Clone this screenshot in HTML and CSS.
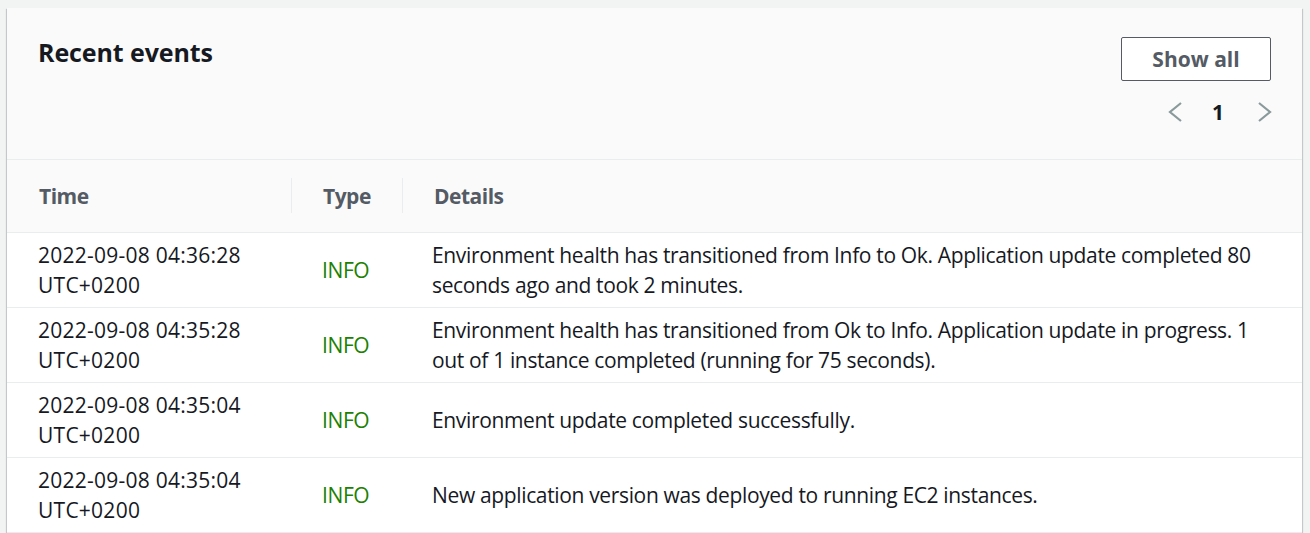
FILE: index.html
```html
<!DOCTYPE html>
<html lang="en">
<head>
<meta charset="utf-8">
<title>Recent events</title>
<link rel="stylesheet" href="styles.css">
</head>
<body>
<div class="card">
  <div class="card-header">
    <h2 class="title">Recent events</h2>
    <div class="actions">
      <button class="btn">Show all</button>
      <div class="pager">
        <svg class="chev" width="16" height="20" viewBox="0 0 16 20"><path d="M14 1 L3 10 L14 19" fill="none" stroke="#8a9a9b" stroke-width="2.2"/></svg>
        <span class="page">1</span>
        <svg class="chev chev-next" width="16" height="20" viewBox="0 0 16 20"><path d="M2 1 L13 10 L2 19" fill="none" stroke="#8a9a9b" stroke-width="2.2"/></svg>
      </div>
    </div>
  </div>
  <table class="events">
    <colgroup>
      <col class="c-time">
      <col class="c-type">
      <col>
    </colgroup>
    <thead>
      <tr>
        <th class="h-time">Time</th>
        <th class="h-div">Type</th>
        <th class="h-div">Details</th>
      </tr>
    </thead>
    <tbody>
      <tr>
        <td class="d-time">2022-09-08 04:36:28 UTC+0200</td>
        <td class="d-type">INFO</td>
        <td class="d-details">Environment health has transitioned from Info to Ok. Application update completed 80 seconds ago and took 2 minutes.</td>
      </tr>
      <tr>
        <td class="d-time">2022-09-08 04:35:28 UTC+0200</td>
        <td class="d-type">INFO</td>
        <td class="d-details">Environment health has transitioned from Ok to Info. Application update in progress. 1 out of 1 instance completed (running for 75 seconds).</td>
      </tr>
      <tr>
        <td class="d-time">2022-09-08 04:35:04 UTC+0200</td>
        <td class="d-type">INFO</td>
        <td class="d-details">Environment update completed successfully.</td>
      </tr>
      <tr>
        <td class="d-time">2022-09-08 04:35:04 UTC+0200</td>
        <td class="d-type">INFO</td>
        <td class="d-details">New application version was deployed to running EC2 instances.</td>
      </tr>
    </tbody>
  </table>
</div>
</body>
</html>
```
FILE: styles.css
```css
html, body {
  margin: 0;
  padding: 0;
}
body {
  background: #f2f3f3;
  font-family: "Open Sans", "Noto Sans", Arial, sans-serif;
  font-size: 21px;
  line-height: 30px;
  color: #16191f;
  overflow: hidden;
}
.card {
  margin: 8px 8px 0 7px;
  background: #ffffff;
  box-shadow: 0 1px 1px 0 rgba(0, 28, 36, 0.3), 1px 1px 1px 0 rgba(0, 28, 36, 0.15), -1px 1px 1px 0 rgba(0, 28, 36, 0.15);
}
.card-header {
  background: #fafafa;
  border-bottom: 1px solid #eaeded;
  display: flex;
  justify-content: space-between;
  align-items: flex-start;
  padding: 29px 31px 32px 31px;
}
.title {
  margin: 0;
  font-size: 25px;
  line-height: 30px;
  font-weight: 700;
  color: #16191f;
  letter-spacing: -0.1px;
}
.actions {
  display: flex;
  flex-direction: column;
  align-items: flex-end;
  gap: 16px;
}
.btn {
  width: 150px;
  height: 44px;
  box-sizing: border-box;
  border: 1px solid #545b64;
  border-radius: 2px;
  background: #ffffff;
  color: #545b64;
  font-family: inherit;
  font-size: 21px;
  font-weight: 700;
  line-height: 30px;
  padding: 0;
}
.pager {
  display: flex;
  align-items: center;
  height: 30px;
  margin-right: -2px;
}
.chev {
  display: block;
}
.page {
  font-weight: 700;
  color: #16191f;
  margin: 0 33px 0 29px;
}
.events {
  width: 100%;
  border-collapse: collapse;
  table-layout: fixed;
}
.c-time { width: 284px; }
.c-type { width: 111px; }
.events th {
  background: #fafafa;
  color: #545b64;
  font-weight: 700;
  text-align: left;
  height: 72px;
  padding: 0 0 0 32px;
  border-bottom: 1px solid #eaeded;
  position: relative;
  vertical-align: middle;
  letter-spacing: -0.5px;
}
.events th.h-div::before {
  content: "";
  position: absolute;
  left: 0;
  top: 18px;
  height: 35px;
  border-left: 1px solid #eaeded;
}
.events td {
  height: 60px;
  padding: 7px 0 7px 31px;
  border-bottom: 1px solid #eaeded;
  vertical-align: middle;
}
.events td.d-time {
  padding-right: 20px;
  letter-spacing: 0.25px;
}
.events td.d-type {
  color: #1d8102;
  letter-spacing: -0.4px;
}
.events td.d-details {
  padding-left: 30px;
  padding-right: 30px;
  letter-spacing: -0.35px;
}
```
